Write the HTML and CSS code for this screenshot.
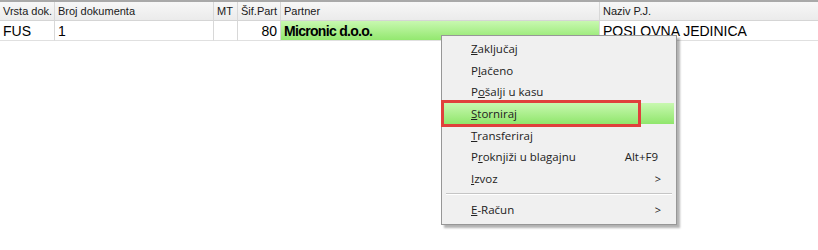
FILE: index.html
```html
<!DOCTYPE html>
<html lang="hr">
  <head>
    <meta charset="UTF-8">
    <title>Dokumenti</title>
    <link rel="stylesheet" href="styles.css">
  </head>
  <body>
    <div class="grid">
        <div class="row head">
            <div class="cell c-vrsta">Vrsta dok.</div>
            <div class="cell c-broj">Broj dokumenta</div>
            <div class="cell c-mt">MT</div>
            <div class="cell c-sif">Šif.Part</div>
            <div class="cell c-partner">Partner</div>
            <div class="cell c-naziv">Naziv P.J.</div>
        </div>
        <div class="row data">
            <div class="cell c-vrsta">FUS</div>
            <div class="cell c-broj">1</div>
            <div class="cell c-mt"></div>
            <div class="cell c-sif num">80</div>
            <div class="cell c-partner selected">Micronic d.o.o.</div>
            <div class="cell c-naziv">POSLOVNA JEDINICA</div>
        </div>
    </div>

    <div class="menu">
        <div class="item"><span class="label"><u>Z</u>aključaj</span></div>
        <div class="item"><span class="label">P<u>l</u>ačeno</span></div>
        <div class="item"><span class="label">P<u>o</u>šalji u kasu</span></div>
        <div class="item active"><span class="label"><u>S</u>torniraj</span></div>
        <div class="item"><span class="label"><u>T</u>ransferiraj</span></div>
        <div class="item"><span class="label">P<u>r</u>oknjiži u blagajnu</span><span class="shortcut">Alt+F9</span></div>
        <div class="item"><span class="label"><u>I</u>zvoz</span><span class="arrow">&gt;</span></div>
        <div class="separator"></div>
        <div class="item"><span class="label"><u>E</u>-Račun</span><span class="arrow">&gt;</span></div>
        <div class="highlight-box"></div>
    </div>
  </body>
</html>
```

FILE: styles.css
```css
body {
    margin: 0;
    padding: 0;
    width: 818px;
    height: 250px;
    background: #ffffff;
    font-family: "Liberation Sans", Arial, sans-serif;
    color: #000000;
    position: relative;
    overflow: hidden;
}

.grid {
    border-top: 2px solid #a9a9a9;
}

.row {
    display: flex;
}

.cell {
    box-sizing: border-box;
    border-right: 1px solid #d8d8d8;
    white-space: nowrap;
    overflow: hidden;
    padding: 0 3px;
}

.head .cell {
    height: 19px;
    line-height: 18px;
    font-size: 11px;
    color: #1a1a1a;
    background: linear-gradient(#f7f7f7, #ebebeb);
    border-bottom: 1px solid #d5d5d5;
}

.data .cell {
    height: 20px;
    line-height: 20px;
    font-size: 14px;
    border-bottom: 1px solid #e0e0e0;
}

.c-vrsta { width: 55px; }
.c-broj { width: 159px; }
.c-mt { width: 24px; }
.c-sif { width: 43px; }
.c-partner { width: 319px; }
.c-naziv { width: 218px; border-right: none; }

.num {
    text-align: right;
}

.data .selected {
    font-weight: 700;
    letter-spacing: -0.7px;
    background: linear-gradient(#c8f8b0, #93e86f);
}

.menu {
    position: absolute;
    left: 441px;
    top: 35px;
    width: 236px;
    box-sizing: border-box;
    padding: 2px 2px 3px 2px;
    background: #f0f0f0;
    border: 1px solid #979797;
    box-shadow: 3px 3px 2px rgba(0, 0, 0, 0.3);
    font-family: "Open Sans", "Noto Sans", sans-serif;
    font-size: 11.5px;
    color: #222222;
}

.item {
    display: flex;
    align-items: center;
    height: 21.6px;
    padding: 0 13px 0 27px;
}

.label {
    flex: 1;
}

.shortcut {
    margin-right: 3px;
}

.arrow {
    font-size: 11px;
}

.item.active {
    background: linear-gradient(#c8f8b0, #90e66c);
}

.separator {
    height: 1px;
    margin: 4px 2px 4px 2px;
    background: #c5c5c5;
    border-bottom: 1px solid #ffffff;
}

.highlight-box {
    position: absolute;
    left: -1px;
    top: 64px;
    width: 200px;
    height: 27px;
    box-sizing: border-box;
    border: 3px solid #e0403c;
}
```
